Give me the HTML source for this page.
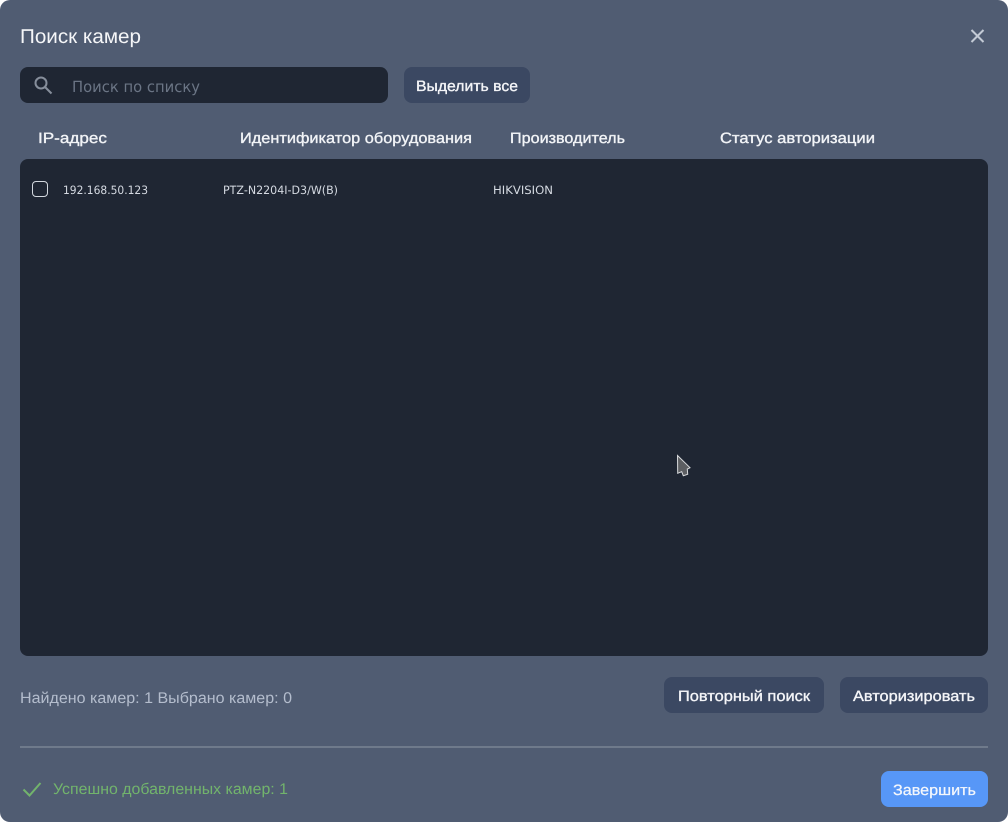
<!DOCTYPE html>
<html lang="ru">
<head>
<meta charset="utf-8">
<title>Поиск камер</title>
<style>
html,body{margin:0;padding:0;width:1008px;height:822px;overflow:hidden;background:#fff}
svg{display:block}
text{font-family:"Liberation Sans",sans-serif;text-rendering:geometricPrecision}
.h{font-size:15px;fill:#f2f4f7;stroke:#f2f4f7;stroke-width:.35px}
.r{font-family:"DejaVu Sans",sans-serif;font-size:11.5px;fill:#d5dae2}
.b{font-size:15px;fill:#f4f5f8;stroke:#f4f5f8;stroke-width:.35px}
</style>
</head>
<body>
<svg width="1008" height="822" viewBox="0 0 1008 822" xmlns="http://www.w3.org/2000/svg">
  <rect x="0" y="0" width="1008" height="822" rx="10" fill="#505c72"/>

  <text x="20" y="43" font-size="20" fill="#f5f6f8" textLength="121" lengthAdjust="spacingAndGlyphs">Поиск камер</text>
  <path d="M971.500 30l12 12M983.500 30l-12 12" stroke="#c3cad5" stroke-width="2" fill="none"/>

  <rect x="20" y="67" width="368" height="36" rx="8" fill="#1f2633"/>
  <circle cx="41" cy="83" r="5.500" stroke="#868e9b" stroke-width="2" fill="none"/>
  <path d="M45 87L51.500 93.500" stroke="#868e9b" stroke-width="2" fill="none"/>
  <text x="72" y="92" font-family="DejaVu Sans" style="font-family:'DejaVu Sans',sans-serif" font-size="15.500" fill="#6b7585" textLength="128" lengthAdjust="spacingAndGlyphs">Поиск по списку</text>

  <rect x="404" y="67" width="126" height="36" rx="8" fill="#3b4862"/>
  <text class="b" x="416" y="91" textLength="102" lengthAdjust="spacingAndGlyphs">Выделить все</text>

  <text class="h" x="38" y="143" textLength="69" lengthAdjust="spacingAndGlyphs">IP-адрес</text>
  <text class="h" x="240" y="143" textLength="232" lengthAdjust="spacingAndGlyphs">Идентификатор оборудования</text>
  <text class="h" x="510" y="143" textLength="115" lengthAdjust="spacingAndGlyphs">Производитель</text>
  <text class="h" x="720" y="143" textLength="155" lengthAdjust="spacingAndGlyphs">Статус авторизации</text>

  <rect x="20" y="159" width="968" height="497" rx="8" fill="#1f2633"/>
  <rect x="32.500" y="181.500" width="15" height="15" rx="3.500" fill="none" stroke="#d3d8df" stroke-width="1"/>
  <text class="r" x="63" y="194" textLength="85" lengthAdjust="spacingAndGlyphs">192.168.50.123</text>
  <text class="r" x="223" y="194" textLength="115" lengthAdjust="spacingAndGlyphs">PTZ-N2204I-D3/W(B)</text>
  <text class="r" x="493" y="194" textLength="60" lengthAdjust="spacingAndGlyphs">HIKVISION</text>

  <path d="M677.500 455.500L690 467.700L687.300 469L687.700 474.300L683.300 475.700L681.700 471.700L677.700 473.300Z" fill="#5c5e62" stroke="#d8dadd" stroke-width="1"/>

  <text x="20" y="703" font-size="15.500" fill="#b4bdcd" textLength="272" lengthAdjust="spacingAndGlyphs">Найдено камер: 1 Выбрано камер: 0</text>

  <rect x="664" y="677" width="160" height="36" rx="8" fill="#3b4862"/>
  <text class="b" x="678" y="701" textLength="132" lengthAdjust="spacingAndGlyphs">Повторный поиск</text>
  <rect x="840" y="677" width="148" height="36" rx="8" fill="#3b4862"/>
  <text class="b" x="853" y="701" textLength="122" lengthAdjust="spacingAndGlyphs">Авторизировать</text>

  <rect x="20" y="746" width="968" height="2" fill="#6f7a8b"/>

  <path d="M23.500 789.500L29.500 795.500L40.500 783" stroke="#72b46c" stroke-width="2" fill="none"/>
  <text x="53" y="794" font-size="15.500" fill="#72b46c" textLength="235" lengthAdjust="spacingAndGlyphs">Успешно добавленных камер: 1</text>

  <rect x="881" y="771" width="107" height="36" rx="8" fill="#5797f7"/>
  <text x="893" y="795" font-size="15" fill="#f4f7fc" stroke="#f4f7fc" stroke-width=".25" textLength="83" lengthAdjust="spacingAndGlyphs">Завершить</text>
</svg>
</body>
</html>
